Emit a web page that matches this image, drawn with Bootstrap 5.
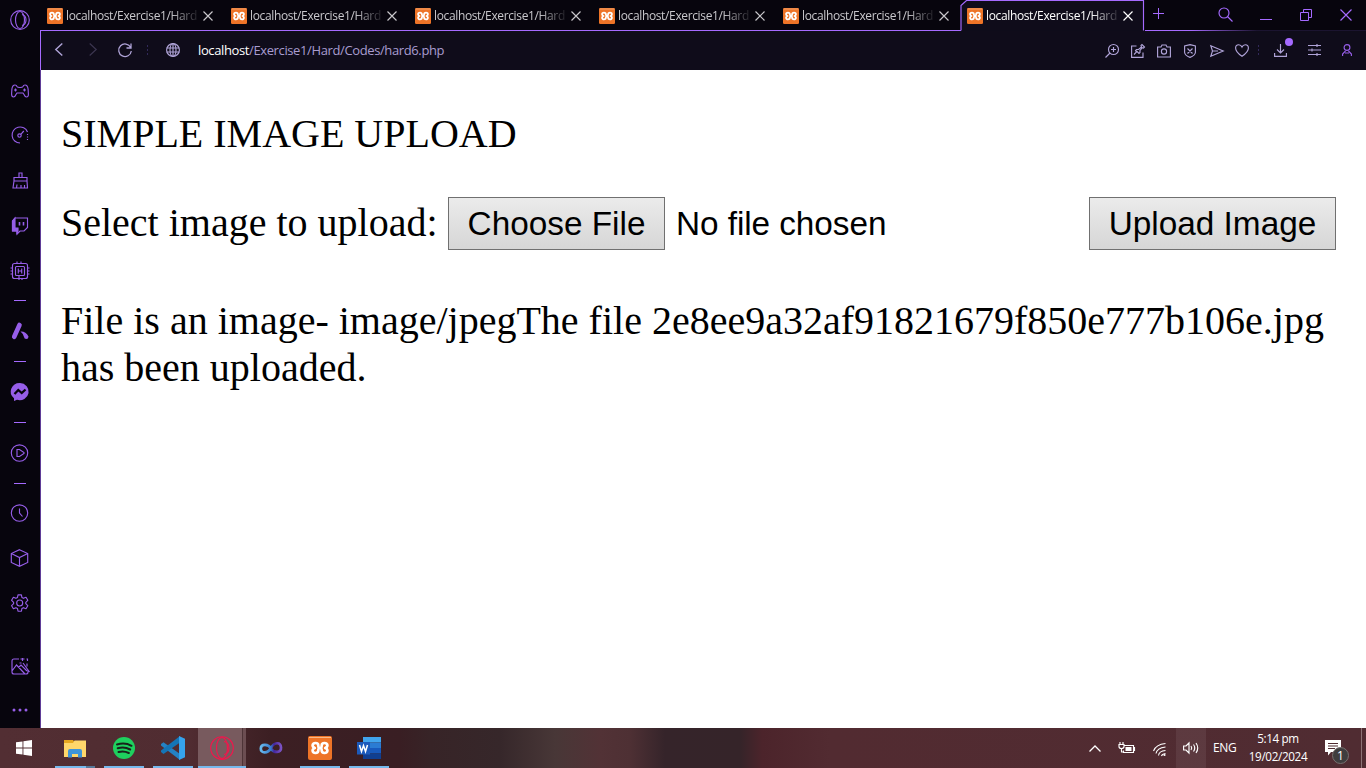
<!DOCTYPE html>
<html lang="en">
<head>
<meta charset="utf-8">
<title>Simple Image Upload</title>
<meta name="viewport" content="width=device-width, initial-scale=1">
<link href="https://cdn.jsdelivr.net/npm/bootstrap@5.3.0/dist/css/bootstrap.min.css" rel="stylesheet">
<style>
  :root { --violet:#a56aff; --lilac:#b0a4d8; --ink:#07050d; --bar:#0f0c1a; }
  body { height:768px; overflow:hidden; font-family:"Open Sans","Noto Sans",sans-serif; background:#fff; }
  svg { display:block; flex:none; fill:none; stroke:currentColor; stroke-width:1.15; overflow:visible; }
  .browser { height:728px; }
  .side { width:40px; background:var(--ink); color:#965ee8; flex:none; }
  .slot { height:45px; padding-bottom:1px; }
  .slot.low { padding:1px 0 0; }
  .slot-l { height:46px; }
  .dash { height:15px; }
  .dash::before { content:""; width:12px; height:1px; background:var(--violet); }
  .main-col { min-width:0; position:relative; }
  .edge { width:1px; flex:none; background:linear-gradient(var(--ink) 30px,var(--violet) 30px,var(--violet) 70px,#5f3c97 70px); }
  .tabs { height:30px; background:var(--ink); }
  .tab-item { width:184px; padding:1px 0 0 6px; position:relative; color:#c9c8cc; flex:none; }
  .tab-title { width:134px; margin-left:3px; padding-top:1px; font-size:12px; line-height:18px; letter-spacing:-.36px; white-space:nowrap;
    -webkit-mask-image:linear-gradient(90deg,#000 105px,transparent 135px); mask-image:linear-gradient(90deg,#000 105px,transparent 135px); }
  .tab-x { margin-left:3px; }
  .tab-item.active { color:#fff; }
  .tab-shape { position:absolute; left:0; top:0; }
  .tab-item > * { z-index:1; }
  .tab-item > .tab-shape { z-index:0; }
  .tool { height:40px; background:var(--bar); color:var(--lilac);
    border-top:1px solid; border-image:linear-gradient(90deg,var(--violet) 920px,var(--bar) 920px,var(--bar) 1103px,var(--violet) 1103px,var(--violet) 1150px,#1b1430 1215px) 1; }
  .addr { font-size:13px; color:#a99cd0; letter-spacing:-.38px; white-space:nowrap; }
  .addr span { color:#fff; }
  .dots { width:1px; height:11px; background:repeating-linear-gradient(#32295a 0 2px,transparent 2px 4px); }
  .page-body { font-family:"Liberation Serif",serif; font-size:40px; line-height:47px; color:#000; padding:40px 20px 0; height:658px; }
  .page-body p { margin:0; }
  .upload-row { margin-top:39px; height:55px; }
  .old-btn { font-family:"Liberation Sans",sans-serif; font-size:33.33px; line-height:38px; height:53px; border:1px solid #707070; background:linear-gradient(#ebebeb,#d6d6d6); color:#000; padding:0; white-space:nowrap; }
  .file-note { font-family:"Liberation Sans",sans-serif; font-size:33.33px; letter-spacing:-.06px; }
  .result { padding-top:46px; }
  .taskbar { height:40px; color:#fff; font-size:12px;
    background:linear-gradient(90deg,#522e33 0,#502c31 190px,#3c1f23 270px,#391e23 400px,#372427 430px,#36272a 500px,#483737 555px,#523236 600px,#4e3034 630px,#35242a 665px,#352429 740px,#4c242b 762px,#522b31 830px,#502c32 1366px); }
  .task { width:49px; height:40px; position:relative; flex:none; }
  .task.run::after { content:""; position:absolute; bottom:0; left:5px; width:40px; height:2px; background:#76b9ed; }
  .task.multi::after { background:linear-gradient(90deg,#76b9ed 31px,#57799a 31px); }
  .task.on { background:linear-gradient(90deg,transparent 1px,#785a5e 1px 45px,#4e3437 45px 46px,#6c4e52 46px); }
  .task.on::after { left:1px; width:48px; }
  .clock { width:72px; font-size:11.7px; line-height:18px; letter-spacing:-.35px; text-align:center; white-space:nowrap; padding-bottom:2px; }
  .note-count { position:absolute; left:7px; top:7px; width:17px; height:17px; border-radius:50%; background:#3f3d3e; border:1px solid #77706f; font-size:12px; line-height:15px; text-align:center; }
</style>
</head>
<body>
<svg width="0" height="0" class="position-absolute">
  <symbol id="xampp" viewBox="0 0 24 24">
    <rect width="24" height="24" rx="2" fill="#ee7427" stroke="none"/>
    <path d="M1 1.500h22" stroke="#f6b98b" stroke-width="1"/>
    <path d="M12 12C10.800 12 10.300 11 10.300 9.400 10.300 6.300 4.600 6.200 4.600 9.300c0 1.300.9 2.200 2.200 2.700-1.300.5-2.200 1.400-2.200 2.700 0 3.100 5.700 3 5.700-.1C10.300 13 10.800 12 12 12s1.700-1 1.700-2.600c0-3.100 5.700-3.200 5.700-.1 0 1.300-.9 2.200-2.200 2.700 1.300.5 2.200 1.400 2.200 2.700 0 3.100-5.700 3-5.700-.1C13.700 13 13.200 12 12 12z" stroke="#fff" stroke-width="2.700" stroke-linejoin="round" fill="none"/>
  </symbol>
</svg>

<div class="browser d-flex">
  <nav class="side d-flex flex-column">
    <div class="d-flex justify-content-center align-items-center" style="height:40px"><svg width="20" height="20" viewBox="0 0 20 20"><circle cx="10" cy="10" r="9.300"/><ellipse cx="10" cy="10" rx="4.500" ry="8.500"/><path d="M12 4.500q4 1 4 5.500t-4 5.500"/></svg></div>
    <div style="height:28px"></div>
    <div class="slot low d-flex justify-content-center align-items-center"><svg width="18" height="14" viewBox="0 0 18 14"><path d="M4 1Q1.500 1 .9 5L.6 10Q.6 13 2.500 13 4 13 5 10.500L6 9h6l1 1.500Q14 13 15.500 13q2 0 1.900-3L17.100 5Q16.500 1 14 1q-1.500 0-2 1.500Q11.500 3.500 9 3.500T6 2.500Q5.500 1 4 1zM4.500 4.500v3M3 6h3M13.500 4.500v3M12 6h3"/></svg></div>
    <div class="slot d-flex justify-content-center align-items-center"><svg width="18" height="18" viewBox="0 0 18 18"><path d="M16.500 6A8 8 0 1 0 9 17"/><circle cx="8.500" cy="9.500" r="1.700"/><path d="M9.800 8.300l3-3.300"/><path d="M16.500 8v7" stroke-dasharray="1 1.500"/></svg></div>
    <div class="slot d-flex justify-content-center align-items-center"><svg width="17" height="17" viewBox="0 0 17 17"><path d="M7 5.500V1h3v4.500M2 5.500h13v3.500H2zM2 9L1 16h14.500L15 9M4.500 16l.5-3.500M9 16v-3M12.500 16v-3"/></svg></div>
    <div class="slot low d-flex justify-content-center align-items-center"><svg width="18" height="18" viewBox="0 0 18 18"><path d="M4 1h12.500v9.500L13 14H9l-3 3v-3H1.500V4z"/><path d="M1.500 4L4 1v10H7v3l-1 3v-3H1.500z" fill="currentColor"/><path d="M8.500 5v3.500M12.500 5v3.500" stroke-width="1.600"/></svg></div>
    <div class="slot low d-flex justify-content-center align-items-center"><svg width="20" height="20" viewBox="0 0 20 20"><rect x="2.500" y="2.500" width="15" height="15" rx="2"/><rect x="5.500" y="5.500" width="9" height="9" rx="1"/><path d="M8.300 7.500v5M11.700 7.500v5M8.300 10h3.400M7 .5v2M11 .5v2M9 15v4M12 17v2M.5 7h2M.5 10h2M.5 13h2M17.500 7h2M17.500 10h2M17.500 13h2"/></svg></div>
    <div class="dash d-flex justify-content-center align-items-center"></div>
    <div class="slot-l d-flex justify-content-center align-items-center"><svg width="18" height="18" viewBox="0 0 18 18"><path d="M8.500 3L3.200 14.800" stroke-width="4.600" stroke-linecap="round"/><path d="M9.500 9.500q5-.5 8 5 0 2.500-2.200 2.500-2 0-2.500-2.500-.8-3-3.300-5z" fill="currentColor" stroke="none"/></svg></div>
    <div class="dash d-flex justify-content-center align-items-center"></div>
    <div class="slot-l d-flex justify-content-center align-items-center"><svg width="18" height="18" viewBox="0 0 18 18"><path d="M9 0a9 8.600 0 1 1-3 16.800L3 18v-2.800A9 8.600 0 0 1 9 0z" fill="currentColor" stroke="none"/><path d="M3.500 11l3.800-4 3.400 3 3.800-3.500" stroke="#07050d" stroke-width="2.300"/></svg></div>
    <div class="dash d-flex justify-content-center align-items-center"></div>
    <div class="slot-l d-flex justify-content-center align-items-center pb-1"><svg width="18" height="18" viewBox="0 0 18 18" style="margin-top:3px"><circle cx="8.500" cy="9" r="8.200"/><path d="M6 5.500v7h2.500L13 9.500v-1L8.500 5.500z"/></svg></div>
    <div class="dash d-flex justify-content-center align-items-center"></div>
    <div class="slot d-flex justify-content-center align-items-center"><svg width="18" height="18" viewBox="0 0 18 18"><circle cx="8.500" cy="9" r="8.200"/><path d="M8.500 4.500V9l3 3.500"/></svg></div>
    <div class="slot d-flex justify-content-center align-items-center"><svg width="18" height="18" viewBox="0 0 18 18"><path d="M8.500.7l8.200 3.800v9l-8.200 3.800L.3 13.500v-9zM.3 4.500l8.200 4 8.200-4M8.500 8.500v8.800"/></svg></div>
    <div class="slot d-flex justify-content-center align-items-center"><svg width="18" height="18" viewBox="0 0 18 18"><path d="M7 .8h3.400l.5 2.600 1.600.9 2.500-1 1.800 3-2 2v1.400l2 2-1.800 3-2.500-1-1.600.9-.5 2.600H7l-.5-2.600-1.600-.9-2.500 1-1.800-3 2-2V8.300l-2-2 1.800-3 2.500 1 1.600-.9z" stroke-linejoin="round"/><circle cx="8.700" cy="9" r="3"/></svg></div>
    <div style="height:18px"></div>
    <div class="slot d-flex justify-content-center align-items-center"><svg width="20" height="17" viewBox="0 0 20 17"><path d="M9 1H4Q2 1 2 3v11q0 2 2 2h12q2 0 2-2v-2M2 13l4.500-6 8.500 9M8.500 9.500l2.500-2.500 6 6M13 5l6.500 9M10.500 1h4M12.500 0v3M16.500 1h1v2M17 5.500v3M9.500 5h2"/></svg></div>
    <div class="d-flex justify-content-center align-items-center" style="height:39px;padding-top:3px"><svg width="18" height="4" viewBox="0 0 18 4" style="stroke:none;fill:currentColor"><circle cx="3" cy="2" r="1.500"/><circle cx="9" cy="2" r="1.500"/><circle cx="15" cy="2" r="1.500"/></svg></div>
  </nav>
  <div class="edge"></div>

  <div class="main-col flex-grow-1 d-flex flex-column">
    <div class="tabs d-flex" id="tabs">
      <div class="tab-item d-flex align-items-center"><svg width="16" height="16"><use href="#xampp"/></svg><div class="tab-title">localhost/Exercise1/Hard</div><svg class="tab-x" width="10" height="10" viewBox="0 0 10 10"><path d="M.5.5l9 9M9.500.5l-9 9"/></svg></div>
      <div class="tab-item d-flex align-items-center"><svg width="16" height="16"><use href="#xampp"/></svg><div class="tab-title">localhost/Exercise1/Hard</div><svg class="tab-x" width="10" height="10" viewBox="0 0 10 10"><path d="M.5.5l9 9M9.500.5l-9 9"/></svg></div>
      <div class="tab-item d-flex align-items-center"><svg width="16" height="16"><use href="#xampp"/></svg><div class="tab-title">localhost/Exercise1/Hard</div><svg class="tab-x" width="10" height="10" viewBox="0 0 10 10"><path d="M.5.5l9 9M9.500.5l-9 9"/></svg></div>
      <div class="tab-item d-flex align-items-center"><svg width="16" height="16"><use href="#xampp"/></svg><div class="tab-title">localhost/Exercise1/Hard</div><svg class="tab-x" width="10" height="10" viewBox="0 0 10 10"><path d="M.5.5l9 9M9.500.5l-9 9"/></svg></div>
      <div class="tab-item d-flex align-items-center"><svg width="16" height="16"><use href="#xampp"/></svg><div class="tab-title">localhost/Exercise1/Hard</div><svg class="tab-x" width="10" height="10" viewBox="0 0 10 10"><path d="M.5.5l9 9M9.500.5l-9 9"/></svg></div>
      <div class="tab-item active d-flex align-items-center"><svg class="tab-shape" width="184" height="31" viewBox="0 0 184 31"><path d="M0 30.500V5.500L5.500.5H182.500V30.500" fill="#0f0c1a" stroke="#a56aff"/></svg><svg width="16" height="16" class="position-relative"><use href="#xampp"/></svg><div class="tab-title position-relative">localhost/Exercise1/Hard</div><svg class="tab-x position-relative" width="10" height="10" viewBox="0 0 10 10"><path d="M.5.5l9 9M9.500.5l-9 9"/></svg></div>
      <div class="d-flex flex-grow-1 align-items-center" style="color:var(--violet)">
        <svg width="11" height="11" viewBox="0 0 11 11" style="margin:-3px 0 0 8px"><path d="M5.500 0v11M0 5.500h11" stroke-width="1"/></svg>
        <svg width="15" height="15" viewBox="0 0 15 15" style="margin:-2px 0 0 54px"><circle cx="6" cy="6" r="5"/><path d="M9.500 9.500l5 5"/></svg>
        <svg width="12" height="11" viewBox="0 0 12 11" style="margin:1px 0 0 27px"><path d="M0 9.500h12" stroke-width="1"/></svg>
        <svg width="12" height="12" viewBox="0 0 12 12" style="margin-left:28px"><path d="M.5 3.500h8v8h-8zM3.500 3.500v-3h8v8h-3" stroke-width="1"/></svg>
        <svg width="12" height="12" viewBox="0 0 12 12" style="margin-left:28px"><path d="M.5.5l11 11M11.500.5l-11 11"/></svg>
      </div>
    </div>

    <div class="tool d-flex align-items-center">
      <svg width="8" height="13" viewBox="0 0 8 13" style="margin:-2px 0 0 14px"><path d="M7.300.5l-6.500 6 6.500 6" stroke-width="1.400"/></svg>
      <svg width="8" height="13" viewBox="0 0 8 13" style="margin:-2px 0 0 26px;color:#3c3650"><path d="M.7.500l6.500 6-6.500 6"/></svg>
      <svg width="14" height="14" viewBox="0 0 14 14" style="margin:-1px 0 0 21px"><path d="M12.700 4.500A6.300 6.300 0 1 0 13.300 8M13 .5V5H8.500" stroke-width="1.300"/></svg>
      <div class="dots" style="margin-left:15px"></div>
      <svg width="14" height="14" viewBox="0 0 14 14" style="margin:-1px 0 0 18px"><circle cx="7" cy="7" r="6.400"/><ellipse cx="7" cy="7" rx="3" ry="6.400"/><path d="M.6 5h12.800M.6 9h12.800M7 .6v12.800"/></svg>
      <div class="addr" style="margin-left:18px"><span>localhost</span>/Exercise1/Hard/Codes/hard6.php</div>
      <div class="ms-auto d-flex align-items-center">
        <svg width="14" height="14" viewBox="0 0 14 14"><circle cx="8.500" cy="5.500" r="5"/><path d="M5 9L.5 13.500M8.500 3v5M6 5.500h5"/></svg>
        <svg width="14" height="14" viewBox="0 0 14 14" style="margin-left:12px"><path d="M5.500 2H.6v11.400H12V8.500M3 10.500L5.500 8 4.500 6.500l1-1h2L10.500 3l-.5-1.500 1-1L13.500 3l-1 1-1.200-.3L9 6.500v2l-1 1L5.500 7"/></svg>
        <svg width="14" height="14" viewBox="0 0 14 14" style="margin-left:12px"><path d="M.6 3H4l1-2h4l1 2h3.400v10H.6z"/><circle cx="7" cy="7.500" r="2.600"/></svg>
        <svg width="12" height="14" viewBox="0 0 12 14" style="margin-left:13px"><path d="M6 .6L11.400 2v6.500Q11 11.500 6 13.400 1 11.500.6 8.500V2zM3.500 4.500l5 5M8.500 4.500l-5 5"/></svg>
        <svg width="14" height="12" viewBox="0 0 14 12" style="margin-left:14px"><path d="M.8.8L13.200 6 .8 11.200 2.500 6zM2.500 6H8"/></svg>
        <svg width="14" height="13" viewBox="0 0 14 13" style="margin-left:11px"><path d="M7 12.300Q.6 8 .6 4 .6.700 3.700.7 6 .7 7 3 8 .7 10.300.7 13.400.7 13.400 4q0 4-6.400 8.300z"/></svg>
        <div class="dots" style="margin-left:9px"></div>
        <div class="position-relative" style="margin-left:15px"><svg width="13" height="13" viewBox="0 0 13 13"><path d="M6.500 0v9M3 5.500L6.500 9 10 5.500M.6 9v3.400h11.800V9"/></svg><svg class="position-absolute" style="left:11px;top:-6px" width="8" height="8" viewBox="0 0 8 8"><circle cx="4" cy="4" r="4" fill="#a56aff" stroke="none"/></svg></div>
        <svg width="13" height="12" viewBox="0 0 13 12" style="margin:-2px 0 0 21px"><path d="M0 1.500h13M0 6h13M0 10.500h13M9 0v3M4 4.500v3M9 9v3"/></svg>
        <svg width="10" height="12" viewBox="0 0 10 12" style="margin:-2px 14px 0 21px;color:#965ee8"><circle cx="5" cy="3.500" r="2.900"/><path d="M.6 12V10L3.500 7M9.400 12V10L6.500 7M3 9h4"/></svg>
      </div>
    </div>

    <main class="page-body">
      <p>SIMPLE IMAGE UPLOAD</p>
      <div class="upload-row d-flex align-items-center">
        <span class="text-nowrap pb-1" style="width:387px;margin-bottom:-1px">Select image to upload:</span>
        <button class="old-btn" style="width:217px">Choose File</button>
        <span class="file-note" style="margin-left:11px">No file chosen</span>
        <button class="old-btn ms-auto" style="width:247px;margin-right:10px">Upload Image</button>
      </div>
      <p class="result">File is an image- image/jpegThe file 2e8ee9a32af91821679f850e777b106e.jpg has been uploaded.</p>
    </main>
  </div>
</div>

<footer class="taskbar d-flex align-items-center">
  <div class="d-flex justify-content-center align-items-center" style="width:50px;padding-right:2px"><svg width="16" height="16" viewBox="0 0 16 16"><path d="M0 2.300L6.500 1.400v6.100H0zM7.400 1.200L16 0v7.500H7.400zM0 8.400h6.500v6.200L0 13.700zM7.400 8.400H16V16l-8.600-1.200z" fill="#fff" stroke="none"/></svg></div>
  <div class="task run multi d-flex justify-content-center align-items-center"><svg width="22" height="19" viewBox="0 0 22 19" style="stroke:none"><path d="M0 1h9l1.500 2H22v15H0z" fill="#e6a820"/><path d="M0 4h9l1.500-2.500H22V18H0z" fill="#fed76b"/><path d="M4 18.500V12q0-2 2-2h10q2 0 2 2v6.500h-4V15H8v3.500z" fill="#3f95d8"/></svg></div>
  <div class="task run d-flex justify-content-center align-items-center"><svg width="22" height="22" viewBox="0 0 22 22"><circle cx="11" cy="11" r="11" fill="#1ed05e" stroke="none"/><path d="M4 7.500q8-2.500 14.500 1.300M4.700 11.300q6.500-2 12.500 1.200M5.500 15q5.500-1.500 10.300 1" stroke="#18231b" stroke-width="2" stroke-linecap="round"/></svg></div>
  <div class="task run d-flex justify-content-center align-items-center"><svg width="24" height="24" viewBox="0 0 24 24" style="stroke:none"><path d="M0 8l2.500-1.700L19 18v6L0 9.500z" fill="#2482c4"/><path d="M0 16l2.500 2L19 6.500V0L0 14.500z" fill="#1475b7"/><path d="M18 0l6 2.800v18.400L18 24z" fill="#35a3ed"/></svg></div>
  <div class="task run on d-flex justify-content-center align-items-center"><svg width="24" height="24" viewBox="0 0 24 24" style="color:#ef174c"><circle cx="12" cy="12" r="11.300"/><ellipse cx="12" cy="12" rx="5.500" ry="10.500"/><path d="M14 5.500q5 1 5 6.500t-5 6.500"/></svg></div>
  <div class="task d-flex justify-content-center align-items-center"><svg width="24" height="14" viewBox="0 0 24 14"><defs><linearGradient id="inf"><stop stop-color="#68b9ed"/><stop offset=".5" stop-color="#377ccc"/><stop offset=".65" stop-color="#42249c"/><stop offset="1" stop-color="#7b52c4"/></linearGradient></defs><path d="M12 7.500C9.500 3 2 2.500 1.800 7.500s7 5.500 10.200-.5 9.500-6.500 10-.5-7.500 5.500-10 1z" stroke="url(#inf)" stroke-width="2.700"/></svg></div>
  <div class="task run d-flex justify-content-center align-items-center"><svg width="24" height="24"><use href="#xampp"/></svg></div>
  <div class="task run d-flex justify-content-center align-items-center"><svg width="24" height="22" viewBox="0 0 24 22"><g stroke="none"><path d="M6 0h18v5.500H6z" fill="#41a5ee"/><path d="M6 5.500h18V11H6z" fill="#2b7cd3"/><path d="M6 11h18v5.500H6z" fill="#185abd"/><path d="M6 16.500h18V22H6z" fill="#103f91"/><path d="M0 5h13v12.500H0z" fill="#1b5abc"/></g><path d="M2.500 8l2 6.500 2-6 2 6 2-6.500" stroke="#fff" stroke-width="1.500"/></svg></div>

  <div class="ms-auto d-flex align-items-center h-100">
    <svg width="12" height="7" viewBox="0 0 12 7"><path d="M.5 6.500L6 1l5.500 5.500" stroke-width="1.300"/></svg>
    <svg width="16" height="12" viewBox="0 0 16 12" style="margin-left:18px"><path d="M5 3.500h9.500v7h-10V8.500M14.500 5.500h1v3h-1M1 0v2M4 0v2M0 2.500h5v2q0 2-2.500 2T0 4.500zM2.500 6v4h2"/><path d="M6.500 5h6v4h-6z" fill="#fff" stroke="none"/></svg>
    <svg width="13" height="13" viewBox="0 0 13 13" style="margin:2px 0 0 18px"><path d="M.5 8Q3 1.500 12.500.6M3 10.500Q4 5 12.500 4M5.500 12.500Q6 8 12.500 7.500M8.500 13q.5-2 4-2.500" stroke-width="1.050"/><circle cx="11.500" cy="12" r="1.100" fill="#fff" stroke="none"/></svg>
    <div class="d-flex justify-content-center align-items-center h-100" style="width:30px;margin-left:10px;background:rgba(255,255,255,.07)"><svg width="16" height="12" viewBox="0 0 16 12"><path d="M.6 4H3l3-3v10L3 8H.6zM8 4q1.500 2 0 4M10.500 2.500q2.500 3.500 0 7M13 1q3.500 5 0 10"/></svg></div>
    <span id="lang" style="margin-left:7px;width:24px;letter-spacing:-.4px;white-space:nowrap">ENG</span>
    <div class="clock" style="margin-left:5px">5:14 pm<br>19/02/2024</div>
    <div class="position-relative" style="margin-left:11px"><svg width="16" height="17" viewBox="0 0 16 17"><path d="M0 0h16v12H6l-3 3.500V12H0z" fill="#fff" stroke="none"/><path d="M3 3.500h10M3 6h10M3 8.500h7" stroke="#502c32"/></svg><div class="note-count">1</div></div>
    <div class="h-100" style="width:1px;margin:0 4px 0 20px;background:#8d7376;flex:none"></div>
  </div>
</footer>
<script src="https://cdn.jsdelivr.net/npm/bootstrap@5.3.0/dist/js/bootstrap.bundle.min.js"></script>
</body>
</html>
